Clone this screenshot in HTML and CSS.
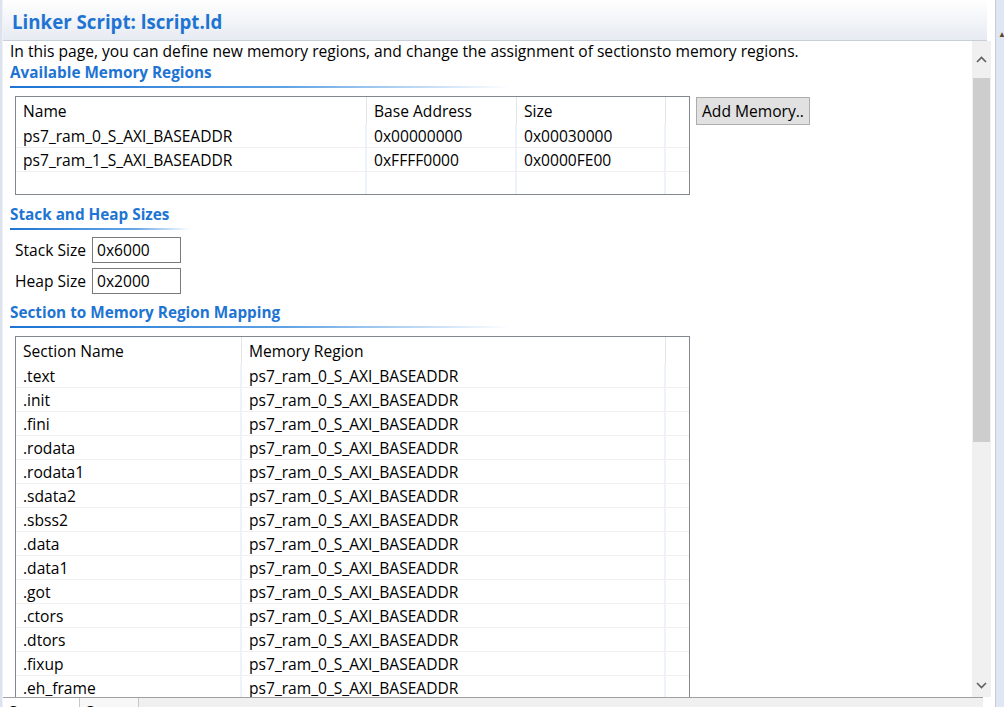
FILE: index.html
```html
<!DOCTYPE html>
<html>
<head>
<meta charset="utf-8">
<link rel="stylesheet" href="styles.css">
</head>
<body>
<div class="frame">
  <div class="left-edge"></div>
  <div class="main">
    <div class="header"><span class="title">Linker Script: lscript.ld</span></div>
    <div class="body">
      <div class="content">
        <p class="desc">In this page, you can define new memory regions, and change the assignment of sectionsto memory regions.</p>
        <h2 class="section-title first">Available Memory Regions</h2>
        <div class="underline long"></div>
        <div class="mem-row">
          <div class="table t1">
            <div class="row head">
              <div class="cell c-name">Name</div>
              <div class="cell c-base">Base Address</div>
              <div class="cell c-size">Size</div>
              <div class="cell c-fill"></div>
            </div>
            <div class="row">
              <div class="cell c-name">ps7_ram_0_S_AXI_BASEADDR</div>
              <div class="cell c-base">0x00000000</div>
              <div class="cell c-size">0x00030000</div>
              <div class="cell c-fill"></div>
            </div>
            <div class="row">
              <div class="cell c-name">ps7_ram_1_S_AXI_BASEADDR</div>
              <div class="cell c-base">0xFFFF0000</div>
              <div class="cell c-size">0x0000FE00</div>
              <div class="cell c-fill"></div>
            </div>
            <div class="row last">
              <div class="cell c-name"></div>
              <div class="cell c-base"></div>
              <div class="cell c-size"></div>
              <div class="cell c-fill"></div>
            </div>
          </div>
          <button class="btn">Add Memory..</button>
        </div>
        <h2 class="section-title">Stack and Heap Sizes</h2>
        <div class="underline short"></div>
        <div class="field first"><span class="label">Stack Size</span><span class="input">0x6000</span></div>
        <div class="field"><span class="label">Heap Size</span><span class="input">0x2000</span></div>
        <h2 class="section-title tight">Section to Memory Region Mapping</h2>
        <div class="underline long"></div>
        <div class="table t2">
          <div class="row head">
            <div class="cell c-sec">Section Name</div>
            <div class="cell c-reg">Memory Region</div>
            <div class="cell c-fill"></div>
          </div>
          <div class="row"><div class="cell c-sec">.text</div><div class="cell c-reg">ps7_ram_0_S_AXI_BASEADDR</div><div class="cell c-fill"></div></div>
          <div class="row"><div class="cell c-sec">.init</div><div class="cell c-reg">ps7_ram_0_S_AXI_BASEADDR</div><div class="cell c-fill"></div></div>
          <div class="row"><div class="cell c-sec">.fini</div><div class="cell c-reg">ps7_ram_0_S_AXI_BASEADDR</div><div class="cell c-fill"></div></div>
          <div class="row"><div class="cell c-sec">.rodata</div><div class="cell c-reg">ps7_ram_0_S_AXI_BASEADDR</div><div class="cell c-fill"></div></div>
          <div class="row"><div class="cell c-sec">.rodata1</div><div class="cell c-reg">ps7_ram_0_S_AXI_BASEADDR</div><div class="cell c-fill"></div></div>
          <div class="row"><div class="cell c-sec">.sdata2</div><div class="cell c-reg">ps7_ram_0_S_AXI_BASEADDR</div><div class="cell c-fill"></div></div>
          <div class="row"><div class="cell c-sec">.sbss2</div><div class="cell c-reg">ps7_ram_0_S_AXI_BASEADDR</div><div class="cell c-fill"></div></div>
          <div class="row"><div class="cell c-sec">.data</div><div class="cell c-reg">ps7_ram_0_S_AXI_BASEADDR</div><div class="cell c-fill"></div></div>
          <div class="row"><div class="cell c-sec">.data1</div><div class="cell c-reg">ps7_ram_0_S_AXI_BASEADDR</div><div class="cell c-fill"></div></div>
          <div class="row"><div class="cell c-sec">.got</div><div class="cell c-reg">ps7_ram_0_S_AXI_BASEADDR</div><div class="cell c-fill"></div></div>
          <div class="row"><div class="cell c-sec">.ctors</div><div class="cell c-reg">ps7_ram_0_S_AXI_BASEADDR</div><div class="cell c-fill"></div></div>
          <div class="row"><div class="cell c-sec">.dtors</div><div class="cell c-reg">ps7_ram_0_S_AXI_BASEADDR</div><div class="cell c-fill"></div></div>
          <div class="row"><div class="cell c-sec">.fixup</div><div class="cell c-reg">ps7_ram_0_S_AXI_BASEADDR</div><div class="cell c-fill"></div></div>
          <div class="row"><div class="cell c-sec">.eh_frame</div><div class="cell c-reg">ps7_ram_0_S_AXI_BASEADDR</div><div class="cell c-fill"></div></div>
        </div>
      </div>
      <div class="scrollbar">
        <div class="arrow up"><svg width="11" height="7" viewBox="0 0 11 7"><path d="M1 6 L5.5 1.5 L10 6" fill="none" stroke="#606060" stroke-width="1.6"/></svg></div>
        <div class="thumb"></div>
        <div class="track"></div>
        <div class="arrow down"><svg width="11" height="7" viewBox="0 0 11 7"><path d="M1 1 L5.5 5.5 L10 1" fill="none" stroke="#606060" stroke-width="1.6"/></svg></div>
      </div>
      <div class="gutter"></div>
    </div>
    <div class="tabs">
      <div class="tab active">Summary</div>
      <div class="tab">Source</div>
      <div class="tab-rest"></div>
    </div>
  </div>
  <div class="right-edge"><span class="edge-mark">▲</span></div>
</div>
</body>
</html>
```

FILE: styles.css
```css
html, body {
  margin: 0;
  padding: 0;
  width: 1004px;
  height: 707px;
  overflow: hidden;
  background: #ffffff;
  font-family: "Open Sans", "Noto Sans", sans-serif;
  font-size: 15.6px;
  color: #000;
}

.frame {
  display: flex;
  width: 1004px;
  height: 707px;
}

.left-edge {
  width: 2px;
  background: #dde3ee;
  border-right: 1px solid #eef1f6;
}

.main {
  flex: 1;
  display: flex;
  flex-direction: column;
  min-width: 0;
}

.right-edge {
  width: 8px;
  border-left: 1px solid #c9ccd2;
  background: #dfe6f4;
  position: relative;
  overflow: hidden;
}

.edge-mark {
  position: absolute;
  left: 2px;
  top: 30px;
  font-size: 8px;
  color: #5a4a20;
  line-height: 8px;
}

.header {
  height: 40px;
  border-bottom: 1px solid #c8cfd9;
  background: linear-gradient(#ffffff, #e6ebf2);
  display: flex;
  align-items: center;
  padding-left: 9px;
  margin-right: 8px;
}

.title {
  font-weight: bold;
  font-size: 18.7px;
  color: #1e74d2;
  padding-top: 2px;
}

.body {
  flex: 1;
  display: flex;
  min-height: 0;
}

.content {
  flex: 1;
  overflow: hidden;
  padding-left: 7px;
}

.desc {
  margin: 0 0 -3px 0;
  line-height: 21px;
  white-space: nowrap;
}

.section-title {
  margin: 0;
  font-size: 15.3px;
  font-weight: bold;
  color: #1e74d2;
  line-height: 19px;
  height: 19px;
  margin-top: 10px;
}

.section-title.first { margin-top: 4px; }
.section-title.tight { margin-top: 9px; }

.underline {
  height: 2px;
  margin-top: 4px;
}

.underline.long {
  width: 500px;
  background: linear-gradient(to right, #1c74d4 0%, #5fa2e4 55%, rgba(255,255,255,0) 100%);
}

.underline.short {
  width: 180px;
  background: linear-gradient(to right, #1c74d4 0%, #6aa8e6 70%, rgba(255,255,255,0) 100%);
}

.mem-row {
  display: flex;
  align-items: flex-start;
  gap: 6px;
  margin-top: 8px;
  margin-left: 5px;
}

.table {
  border: 1px solid #828790;
  background: #fff;
  width: 673px;
}

.row {
  display: flex;
  height: 23px;
  border-bottom: 1px solid #f0f0f0;
}

.row.head {
  height: 27px;
  border-bottom: none;
}

.row.last {
  height: 22px;
  border-bottom: none;
}

.cell {
  line-height: 24px;
  padding-left: 7px;
  white-space: nowrap;
  overflow: hidden;
  box-sizing: border-box;
  border-right: 2px solid #eef2fb;
}

.row.head .cell {
  line-height: 28px;
  border-right: 1px solid #e5e5e5;
}

.cell.c-fill {
  flex: 1;
  border-right: none;
}
.row.head .cell.c-fill { border-right: none; }

.t1 .c-name { width: 351px; }
.t1 .c-base { width: 150px; }
.t1 .c-size { width: 149px; }

.t2 {
  margin-top: 8px;
  margin-left: 5px;
}
.t2 .c-sec { width: 226px; }
.t2 .c-reg { width: 424px; }

.btn {
  font-family: inherit;
  font-size: 15.6px;
  background: #e1e1e1;
  border: 1px solid #adadad;
  height: 28px;
  padding: 0 5px;
  color: #000;
  margin-top: 1px;
  line-height: 24px;
}

.field {
  display: flex;
  align-items: center;
  margin-left: 5px;
  height: 26px;
  margin-top: 5px;
}

.field.first { margin-top: 7px; }

.label {
  width: 77px;
}

.input {
  box-sizing: border-box;
  width: 89px;
  height: 26px;
  border: 1px solid #7a7a7a;
  line-height: 24px;
  padding-left: 4px;
}

.scrollbar {
  width: 19px;
  background: #f0f0f0;
  display: flex;
  flex-direction: column;
}

.arrow {
  height: 24px;
  display: flex;
  align-items: center;
  justify-content: center;
}

.arrow.up { height: 37px; }

.thumb {
  height: 364px;
  margin: 0 1px;
  background: #cdcdcd;
}

.track { flex: 1; }

.gutter { width: 4px; }

.tabs {
  height: 9px;
  border-top: 1px solid #a0a0a0;
  background: #f0f0f0;
  display: flex;
  margin-right: 12px;
  overflow: hidden;
}

.tab {
  box-sizing: border-box;
  font-size: 15px;
  line-height: 15px;
  padding: 5px 0 0 6px;
  border-right: 1px solid #c8c8c8;
  background: #f7f7f7;
  overflow: hidden;
  white-space: nowrap;
}

.tab.active {
  width: 77px;
  background: #ffffff;
}

.tab:nth-child(2) { width: 59px; }

.tab-rest { flex: 1; }
```
